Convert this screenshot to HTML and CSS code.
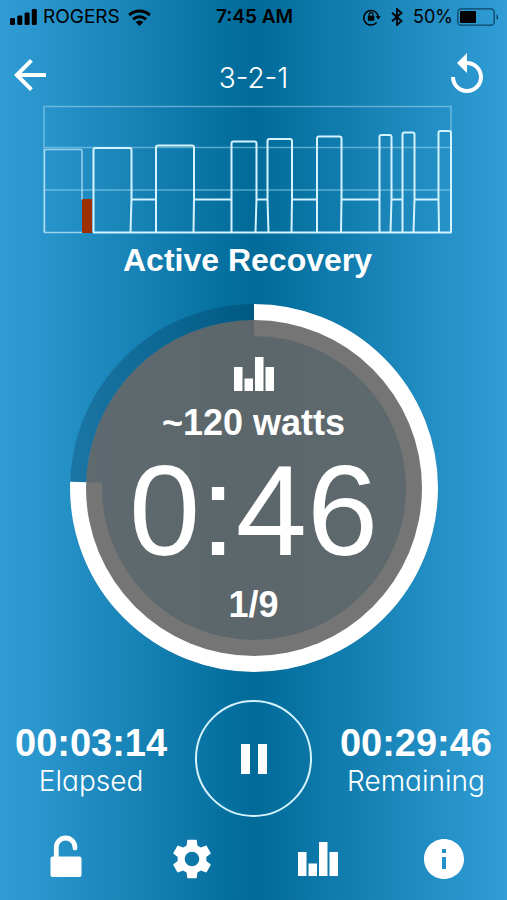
FILE: index.html
```html
<!DOCTYPE html>
<html lang="en">
<head>
<meta charset="utf-8">
<meta name="viewport" content="width=device-width, initial-scale=1">
<title>3-2-1</title>
<link rel="stylesheet" href="styles.css">
</head>
<body>
<div class="app">
  <div class="status">
    <div class="status-group">
      <svg width="27" height="16" viewBox="0 0 27 16" aria-hidden="true"><rect x="0" y="9" width="5" height="7" rx="1.2"/><rect x="7.3" y="6.5" width="5" height="9.5" rx="1.2"/><rect x="14.6" y="3.5" width="5" height="12.5" rx="1.2"/><rect x="21.8" y="0" width="5" height="16" rx="1.2"/></svg>
      <span class="carrier">ROGERS</span>
      <svg class="wifi" width="23" height="17" viewBox="0 0 23 17" aria-hidden="true"><g fill="none" stroke="#000" stroke-width="3"><path d="M1.2 6.2a14.8 14.8 0 0 1 20.6 0"/><path d="M5 10.3a9.4 9.4 0 0 1 13 0"/></g><path d="M11.5 17 7.6 13a5.5 5.5 0 0 1 7.8 0z"/></svg>
    </div>
    <span class="clock">7:45 AM</span>
    <div class="status-group status-right">
      <svg width="18" height="18" viewBox="0 0 18 18" aria-hidden="true"><path d="M13.6 14.6A7.3 7.3 0 1 1 15.3 8.6" fill="none" stroke="#000" stroke-width="1.5"/><path d="M12.6 8.2h5.2l-2.6 3.3z"/><rect x="4.9" y="7.8" width="6.4" height="5" rx=".6"/><path d="M6.2 8V6.6a1.9 1.9 0 0 1 3.8 0V8" fill="none" stroke="#000" stroke-width="1.2"/></svg>
      <svg class="bluetooth" width="12" height="18" viewBox="0 0 12 18" aria-hidden="true"><path d="M1 4.7 10.5 13 6 17V1l4.500 4L1 13.300" fill="none" stroke="#000" stroke-width="1.8"/></svg>
      <span>50%</span>
      <svg width="42" height="18" viewBox="0 0 42 18" aria-hidden="true"><rect x=".8" y=".8" width="36.400" height="16.400" rx="3.500" fill="none" stroke="#0b4565" stroke-width="1.300"/><rect x="3" y="3" width="16" height="12" rx="1"/><path d="M39.500 6.200c2.200.9 2.200 4.700 0 5.600z" fill="#0b4565"/></svg>
    </div>
  </div>

  <header class="header">
    <button class="icon-button back" type="button" aria-label="Back"><svg width="48" height="48" viewBox="0 0 24 24"><path d="M20 11H7.830l5.590-5.590L12 4l-8 8 8 8 1.410-1.410L7.830 13H20v-2z"/></svg></button>
    <h1 class="title">3-2-1</h1>
    <button class="icon-button" type="button" aria-label="Restart"><svg width="48" height="48" viewBox="0 0 24 24"><path d="M12 5V1L7 6l5 5V7c3.310 0 6 2.690 6 6s-2.690 6-6 6-6-2.690-6-6H4c0 4.420 3.580 8 8 8s8-3.580 8-8-3.580-8-8-8z"/></svg></button>
  </header>

  <main class="main">
    <section class="workout" aria-label="Workout">
      <svg class="chart" viewBox="0 0 409 129" role="img" aria-label="Workout intervals">
        <g class="grid"><path d="M1 127.500V1.500H408V127.500M1 42.500H408M1 85H408"/></g>
        <path class="done" d="M1.500 127.500V46q0-1.500 1.500-1.500H37.500q1.500 0 1.500 1.500V95M1 127.500H40"/>
        <g class="step">
          <path d="M50.500 127.500V45q0-2 2-2H86.500q2 0 2 2V94L87.500 127.500"/>
          <path d="M89 94.500H113"/>
          <path d="M113 127.500V42.500q0-2 2-2H149q2 0 2 2V94L150.500 127.500"/>
          <path d="M151 94.500H188.500"/>
          <path d="M188.500 127.500V38.500q0-2 2-2H211.500q2 0 2 2V94L212.500 127.500"/>
          <path d="M214 94.500H224"/>
          <path d="M225.500 127.500L224.500 94V36q0-2 2-2H247q2 0 2 2V94L248.500 127.500"/>
          <path d="M249 94.500H274"/>
          <path d="M274 127.500V33.500q0-2 2-2H296.500q2 0 2 2V94L298 127.500"/>
          <path d="M299 94.500H336.500"/>
          <path d="M336.500 127.500V32q0-2 2-2H346.500q2 0 2 2V94L347.500 127.500"/>
          <path d="M349 94.500H359.500"/>
          <path d="M359.500 127.500V29.500q0-2 2-2H369.500q2 0 2 2V94L370.500 127.500"/>
          <path d="M371.500 94.500H395"/>
          <path d="M396 127.500L395.500 94V28q0-2 2-2H406q2 0 2 2V127.500"/>
          <path d="M50 127.500H408.500"/>
        </g>
        <path class="current" d="M39 128V95q0-1 1-1H49V128z"/>
      </svg>
      <h2 class="phase">Active Recovery</h2>
    </section>

    <section class="dial" aria-label="Current interval">
      <svg class="dial-ring" viewBox="0 0 368 368" aria-hidden="true">
        <circle class="track" cx="184" cy="184" r="176"/>
        <circle class="progress" cx="184" cy="184" r="168" pathLength="360" stroke-dasharray="272 88" transform="rotate(-90 184 184)"/>
        <circle class="disc" cx="184" cy="184" r="168"/>
      </svg>
      <div class="dial-text">
        <svg class="bars" width="40" height="34" viewBox="0 0 40 34" aria-hidden="true"><path d="M0 10h8.500v24H0zM10.500 21.500H19V34h-8.500zM21 0h8.500v34H21zM31.500 10H40v24h-8.500z"/></svg>
        <p class="watts">~120 watts</p>
        <p class="countdown">0:46</p>
        <p class="lap">1/9</p>
      </div>
    </section>

    <section class="totals" aria-label="Totals">
      <div class="total"><span class="total-time">00:03:14</span><span class="total-label">Elapsed</span></div>
      <button class="pause" type="button" aria-label="Pause"><svg width="26" height="30" viewBox="0 0 26 30"><path d="M0 0h9v30H0zM17 0h9v30h-9z"/></svg></button>
      <div class="total"><span class="total-time">00:29:46</span><span class="total-label">Remaining</span></div>
    </section>
  </main>

  <nav class="nav">
    <button class="icon-button" type="button" aria-label="Unlock"><svg width="48" height="48" viewBox="0 0 48 48"><rect x="8.500" y="21.500" width="31" height="20.500" rx="2"/><path d="M14.300 23V12.300a9.300 9.300 0 0 1 18.600 0V13" fill="none" stroke="#fff" stroke-width="4.800" stroke-linecap="round"/></svg></button>
    <button class="icon-button" type="button" aria-label="Settings"><svg width="48" height="48" viewBox="0 0 24 24"><path d="M19.140 12.940c.04-.3.060-.610.060-.940 0-.320-.020-.640-.070-.940l2.030-1.580c.180-.140.230-.410.120-.610l-1.920-3.320c-.120-.220-.370-.290-.590-.220l-2.390.960c-.5-.380-1.030-.7-1.620-.940l-.360-2.540c-.040-.240-.240-.410-.480-.410h-3.840c-.240 0-.430.170-.470.410l-.360 2.540c-.590.240-1.130.570-1.620.940l-2.390-.960c-.220-.080-.470 0-.590.220L2.740 8.870c-.120.210-.080.470.120.610l2.030 1.580c-.050.3-.090.630-.090.940s.020.640.070.940l-2.030 1.580c-.180.140-.230.410-.120.610l1.920 3.320c.120.220.370.290.590.220l2.390-.960c.5.380 1.030.7 1.620.940l.360 2.540c.050.240.240.410.480.410h3.840c.240 0 .440-.170.470-.410l.360-2.540c.590-.240 1.130-.560 1.620-.940l2.390.960c.220.080.470 0 .590-.220l1.920-3.320c.120-.220.070-.470-.120-.610l-2.010-1.580zM12 15.600c-1.980 0-3.600-1.620-3.600-3.600s1.620-3.600 3.600-3.600 3.600 1.620 3.600 3.600-1.620 3.600-3.600 3.600z"/></svg></button>
    <button class="icon-button" type="button" aria-label="Power"><svg width="40" height="34" viewBox="0 0 40 34"><path d="M0 10h8.500v24H0zM10.500 21.500H19V34h-8.500zM21 0h8.500v34H21zM31.500 10H40v24h-8.500z"/></svg></button>
    <button class="icon-button" type="button" aria-label="Information"><svg width="48" height="48" viewBox="0 0 24 24"><path d="M12 2C6.480 2 2 6.480 2 12s4.480 10 10 10 10-4.480 10-10S17.520 2 12 2zm1 15h-2v-6h2v6zm0-8h-2V7h2v2z"/></svg></button>
  </nav>
</div>
</body>
</html>
```
FILE: styles.css
```css
* {
  box-sizing: border-box;
}

body {
  margin: 0;
  color: #fff;
  font-family: "Liberation Sans", Arial, sans-serif;
}

h1, h2, p {
  margin: 0;
}

svg {
  display: block;
}

button {
  margin: 0;
  padding: 0;
  border: 0;
  background: none;
  color: inherit;
  cursor: pointer;
}

.app {
  min-height: 100vh;
  padding-bottom: 16px;
  background: linear-gradient(90deg, #309dd6 0%, #006b99 50%, #309dd6 100%);
}

.status {
  display: grid;
  grid-template-columns: 1fr auto 1fr;
  align-items: center;
  height: 34px;
  padding: 0 8px 0 10px;
  color: #000;
  font: 400 18px/24px Inter, sans-serif;
}

.status-group {
  display: flex;
  align-items: center;
  gap: 6px;
}

.status-right {
  justify-content: flex-end;
  gap: 4px;
}

.wifi {
  margin-left: 2px;
}

.bluetooth {
  margin: 0 6px;
}

.carrier {
  font-size: 19px;
}

.clock {
  font-weight: 600;
  font-size: 19px;
}

.header {
  display: grid;
  grid-template-columns: 48px 1fr 48px;
  align-items: center;
  padding: 17px 16px 6px;
}

.title {
  padding-top: 6px;
  text-align: center;
  font: 300 28px/32px Inter, sans-serif;
}

.icon-button {
  display: grid;
  place-items: center;
  height: 48px;
}

.back {
  justify-items: start;
  margin-left: -10px;
}

.icon-button svg,
.pause svg,
.bars {
  fill: #fff;
}

.workout {
  padding: 0 55px 0 43px;
}

.chart {
  width: 100%;
  fill: none;
}

.grid {
  stroke: rgba(190, 232, 250, 0.45);
  stroke-width: 1.5;
}

.done {
  stroke: rgba(205, 240, 255, 0.7);
  stroke-width: 1.5;
}

.step {
  stroke: #d5f3ff;
  stroke-width: 2;
}

.current {
  fill: #9c3000;
}

.phase {
  padding-top: 8px;
  text-align: center;
  font-size: 32px;
  line-height: 36px;
}

.dial {
  display: grid;
  width: calc(100% - 139px);
  margin: 26px auto 0;
}

.dial-ring,
.dial-text {
  grid-area: 1 / 1;
}

.dial-ring {
  width: 100%;
}

.track {
  fill: none;
  stroke: rgba(0, 20, 40, 0.2);
  stroke-width: 16;
}

.progress {
  fill: none;
  stroke: #fff;
  stroke-width: 32;
}

.disc {
  fill: rgba(102, 102, 102, 0.9);
}

.dial-text {
  display: flex;
  flex-direction: column;
  align-items: center;
  justify-content: center;
  padding-top: 8px;
}

.watts,
.lap {
  font-size: 36px;
  font-weight: 700;
  line-height: 44px;
}

.watts {
  margin-top: 10px;
}

.countdown {
  margin: 14px 0 20px;
  font-size: 128px;
  line-height: 104px;
}

.totals {
  display: flex;
  align-items: center;
  justify-content: space-between;
  margin-top: 28px;
  padding: 0 15px;
}

.total {
  display: flex;
  flex-direction: column;
  align-items: center;
  padding-top: 4px;
}

.total-time {
  font-size: 38px;
  font-weight: 700;
  line-height: 40px;
}

.total-label {
  font: 300 28px/36px Inter, sans-serif;
  font-feature-settings: "cv11";
}

.pause {
  display: grid;
  place-items: center;
  width: 117px;
  height: 117px;
  border: 2px solid #d5f3ff;
  border-radius: 50%;
}

.nav {
  display: grid;
  grid-template-columns: repeat(4, 1fr);
  padding: 18px 0 0 3px;
}
```
